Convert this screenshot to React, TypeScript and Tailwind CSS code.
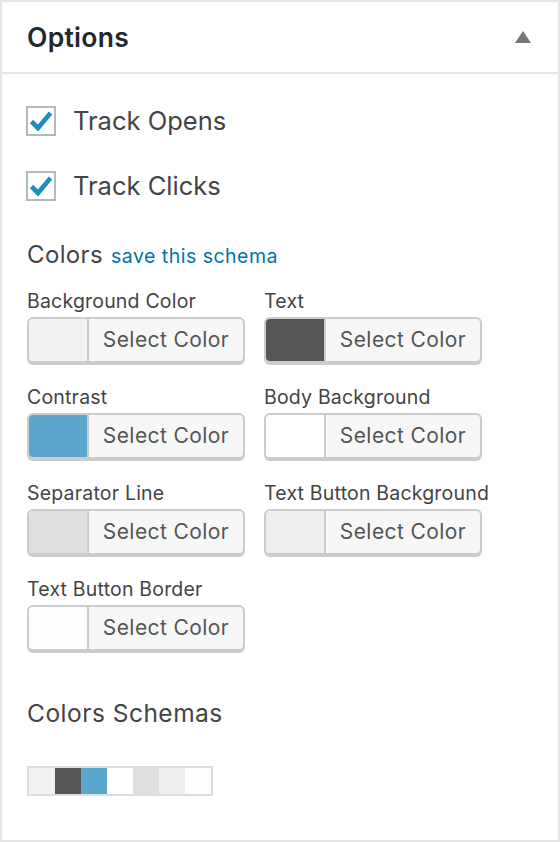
import React from "react";

const font = { fontFamily: "Inter, 'Noto Sans', sans-serif" };

function Check() {
  return (
    <div className="w-[30px] h-[30px] border-2 border-[#b4b9be] bg-white flex items-center justify-center shrink-0">
      <svg width="24" height="22" viewBox="0 0 24 22">
        <path d="M2.5 11.5 L9 18 L21.5 3" fill="none" stroke="#1e8cbe" strokeWidth="4.6" strokeLinecap="butt" strokeLinejoin="miter" />
      </svg>
    </div>
  );
}

function ColorField({ label, color }: { label: string; color: string }) {
  return (
    <div className="flex flex-col w-[218px]">
      <div className="h-[35px] flex items-center whitespace-nowrap text-[19.5px] tracking-[0.01em] text-[#444] leading-none pt-[4px]">{label}</div>
      <div className="flex h-[46px] border-2 border-[#ccc] rounded-[6px] bg-[#f7f7f7] shadow-[0_2px_0_#ccc] overflow-hidden">
        <div className="w-[60px] h-full border-r-2 border-[#ccc]" style={{ backgroundColor: color }} />
        <div className="flex-1 flex items-center justify-center text-[21px] tracking-[0.02em] text-[#555] pb-[1px]">Select Color</div>
      </div>
    </div>
  );
}

export default function App() {
  const fields = [
    ["Background Color", "#f1f2f2"],
    ["Text", "#555555"],
    ["Contrast", "#5ba6cd"],
    ["Body Background", "#ffffff"],
    ["Separator Line", "#e0e0e0"],
    ["Text Button Background", "#eeeeee"],
    ["Text Button Border", "#fdfdfd"],
  ];
  const strip = ["#f1f2f2", "#555555", "#5ba6cd", "#ffffff", "#e0e0e0", "#eeeeee", "#fdfdfd"];
  return (
    <div style={font} className="w-[560px] h-[842px] bg-white border-2 border-[#e5e5e5] flex flex-col">
      <div className="h-[72px] border-b-2 border-[#e5e5e5] flex items-center justify-between pl-[25px] pr-[27px]">
        <div className="text-[26.5px] font-semibold tracking-[0.01em] text-[#23282d] pt-[1px]">Options</div>
        <svg width="16" height="12" viewBox="0 0 16 12">
          <polygon points="8,0 16,12 0,12" fill="#72777c" />
        </svg>
      </div>
      <div className="flex flex-col pl-[24px] pt-[32px]">
        <div className="flex items-center gap-[17px] h-[30px]">
          <Check />
          <span className="text-[25.5px] text-[#444]">Track Opens</span>
        </div>
        <div className="flex items-center gap-[17px] h-[30px] mt-[35px]">
          <Check />
          <span className="text-[25.5px] text-[#444]">Track Clicks</span>
        </div>
        <div className="flex items-baseline gap-[8px] mt-[36px] pl-[1px]">
          <span className="text-[24px] tracking-[0.015em] text-[#444]">Colors</span>
          <span className="text-[19.5px] tracking-[0.025em] text-[#0073aa]">save this schema</span>
        </div>
        <div className="grid grid-cols-[218px_218px] gap-x-[19px] gap-y-[15px] mt-[9px] pl-[1px]">
          {fields.map(([l, c]) => (
            <ColorField key={l} label={l} color={c} />
          ))}
        </div>
        <div className="mt-[44px] text-[24.5px] tracking-[0.02em] text-[#444] pl-[1px]">Colors Schemas</div>
        <div className="mt-[34px] ml-[1px] flex w-max border-2 border-[#ddd]">
          {strip.map((c, i) => (
            <div key={i} className="w-[26px] h-[26px]" style={{ backgroundColor: c }} />
          ))}
        </div>
      </div>
    </div>
  );
}
